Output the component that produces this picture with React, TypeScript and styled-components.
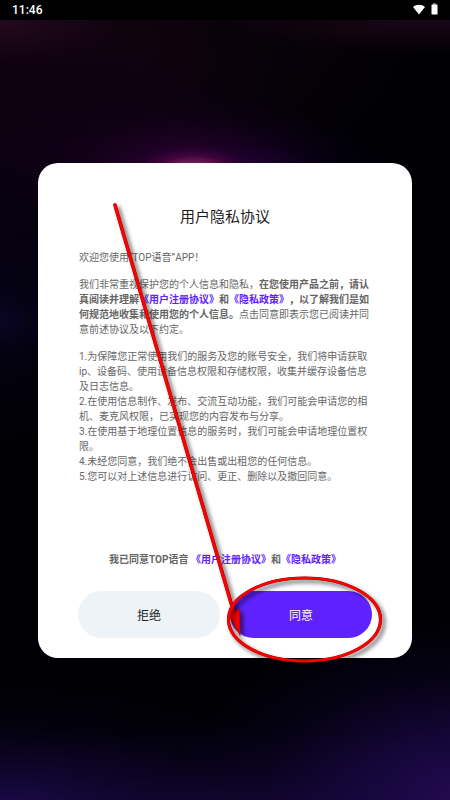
import React from "react";
import styled, { createGlobalStyle } from "styled-components";

const GlobalStyle = createGlobalStyle`
  *, *::before, *::after { box-sizing: border-box; }
  body {
    margin: 0;
    background: #000004;
    font-family: Roboto, "Noto Sans CJK SC", sans-serif;
    text-spacing-trim: space-all;
  }
`;

const Screen = styled.div`
  display: flex;
  flex-direction: column;
  min-height: 100vh;
  overflow: hidden;
`;

const StatusBar = styled.header`
  display: flex;
  align-items: center;
  justify-content: space-between;
  height: 20px;
  padding: 0 12px;
  background: #000;
  color: #fff;
`;

const Clock = styled.time`
  font-size: 12px;
  font-weight: 500;
  line-height: 20px;
`;

const StatusIcons = styled.div`
  display: flex;
  align-items: center;
  gap: 6px;
  height: 18px;
  margin-bottom: 2px;
`;

const Stage = styled.main`
  flex: 1;
  display: flex;
  align-items: center;
  justify-content: center;
  padding: 0 38px;
  background:
    radial-gradient(ellipse 70px 30px at 43% 152px, #cc5a8c 0%, rgba(150, 44, 106, 0.75) 25%, rgba(104, 10, 84, 0.35) 55%, rgba(70, 0, 70, 0.1) 80%, rgba(60, 0, 60, 0) 100%),
    radial-gradient(ellipse 170px 85px at 42% 155px, rgba(74, 0, 80, 0.8) 0%, rgba(50, 0, 62, 0.45) 35%, rgba(28, 0, 40, 0.15) 70%, rgba(20, 0, 30, 0) 100%),
    radial-gradient(ellipse 130px 60px at 59% 155px, rgba(32, 4, 84, 0.5) 0%, rgba(14, 0, 50, 0.2) 50%, rgba(10, 0, 40, 0) 100%),
    radial-gradient(ellipse 60px 40px at 0% 302px, rgba(15, 8, 50, 0.6) 0%, rgba(10, 5, 40, 0.25) 50%, rgba(6, 2, 30, 0) 100%),
    radial-gradient(ellipse 120px 150px at 0% 280px, rgba(8, 3, 28, 0.7) 0%, rgba(4, 1, 16, 0) 100%),
    radial-gradient(ellipse 260px 150px at 14% 130px, rgba(20, 0, 26, 0.6) 0%, rgba(14, 0, 20, 0) 100%),
    radial-gradient(ellipse 120px 50px at 0% 0%, #260a1e 0%, rgba(24, 4, 18, 0) 100%),
    radial-gradient(ellipse 200px 35px at 94% 0%, #1c0618 0%, rgba(14, 2, 12, 0) 100%),
    radial-gradient(ellipse 330px 200px at 22% 0%, #10030e 0%, rgba(8, 0, 8, 0) 100%),
    radial-gradient(ellipse 300px 180px at 104% 100%, #240a52 0%, rgba(27, 8, 72, 0.75) 35%, rgba(14, 4, 46, 0.35) 70%, rgba(6, 1, 20, 0) 100%),
    radial-gradient(ellipse 340px 135px at 0% 102%, #1c0b4e 0%, rgba(18, 6, 52, 0.65) 40%, rgba(8, 2, 28, 0.3) 70%, rgba(4, 1, 14, 0) 100%),
    radial-gradient(ellipse 340px 90px at 50% 102%, #1a0840 0%, rgba(14, 4, 40, 0.5) 50%, rgba(4, 1, 14, 0) 100%),
    #000004;
`;

const Dialog = styled.section`
  position: relative;
  display: flex;
  flex-direction: column;
  width: 100%;
  max-width: 420px;
  padding: 43px 40px 20px;
  border-radius: 20px;
  background: #fff;
`;

const Title = styled.h1`
  margin: 0 0 22px;
  color: #1c1c1c;
  font-size: 15px;
  font-weight: 400;
  line-height: 22px;
  text-align: center;
`;

const Agreement = styled.div`
  display: flex;
  flex-direction: column;
  gap: 12px;
  padding: 0 1px;
  color: #666;
  font-size: 10px;
  line-height: 15px;
`;

const Paragraph = styled.p`
  margin: 0;
`;

const Strong = styled.strong`
  color: #666;
  font-weight: 700;
`;

const Terms = styled.ol`
  margin: 0;
  padding: 0;
  list-style: none;
`;

const PolicyLink = styled.a`
  color: #5f22ff;
  text-decoration: none;
`;

const Consent = styled.p`
  margin: 68px 0 24px;
  color: #666;
  font-size: 10px;
  font-weight: 700;
  line-height: 15px;
  text-align: center;
`;

const Actions = styled.div`
  display: grid;
  grid-template-columns: 1fr 1fr;
  gap: 10px;
`;

const ActionButton = styled.button<{ $primary?: boolean }>`
  height: 47px;
  padding: 0;
  border: 0;
  border-radius: 24px;
  background: ${(p) => (p.$primary ? "#5f22ff" : "#edf3f6")};
  color: ${(p) => (p.$primary ? "#fff" : "#222")};
  font-family: inherit;
  font-size: 12px;
  cursor: pointer;
`;

const Markup = styled.svg`
  position: absolute;
  inset: 0;
  width: 100%;
  height: 100%;
  overflow: visible;
  pointer-events: none;
`;

const WifiIcon = () => (
  <svg width="12" height="11" viewBox="0 0 12 11" aria-hidden="true">
    <path d="M0 3C3.4-.1 8.600-.1 12 3L6 10.400Z" fill="#fff" />
  </svg>
);

const BatteryIcon = () => (
  <svg width="7" height="12" viewBox="0 0 7 12" aria-hidden="true">
    <path d="M2 0h3v2H2z" fill="#777" />
    <rect x="0.500" y="1.500" width="6" height="10" rx="0.600" fill="#fff" />
  </svg>
);

const ArrowMarkup = () => (
  <Markup viewBox="0 0 374 495" aria-hidden="true">
    <defs>
      <filter id="markShadow" x="-20%" y="-20%" width="150%" height="150%">
        <feDropShadow dx="3" dy="3" stdDeviation="2" floodColor="#000" floodOpacity="0.6" />
      </filter>
    </defs>
    <g filter="url(#markShadow)" fill="none" strokeLinecap="round">
      <path d="M77 42L196 450" stroke="#8d1010" strokeWidth="3.600" />
      <path d="M77 42L196 450" stroke="#fe0000" strokeWidth="2.900" />
      <path
        d="M202 472.500L190 450.500L196 448.500L201.500 446Z"
        fill="#fe0000"
        stroke="#8d1010"
        strokeWidth="0.500"
      />
    </g>
    <g filter="url(#markShadow)" fill="none">
      <ellipse cx="266.500" cy="456.500" rx="76" ry="41.500" stroke="#8d1010" strokeWidth="3.200" />
      <ellipse cx="266.500" cy="456.500" rx="76" ry="41.500" stroke="#fe0000" strokeWidth="2.600" />
    </g>
  </Markup>
);

const terms = [
  "1.为保障您正常使用我们的服务及您的账号安全，我们将申请获取ip、设备码、使用设备信息权限和存储权限，收集并缓存设备信息及日志信息。",
  "2.在使用信息制作、发布、交流互动功能，我们可能会申请您的相机、麦克风权限，已实现您的内容发布与分享。",
  "3.在使用基于地理位置信息的服务时，我们可能会申请地理位置权限。",
  "4.未经您同意，我们绝不会出售或出租您的任何信息。",
  "5.您可以对上述信息进行访问、更正、删除以及撤回同意。",
];

export default function App() {
  return (
    <Screen lang="zh-CN">
      <GlobalStyle />
      <StatusBar>
        <Clock>11:46</Clock>
        <StatusIcons>
          <WifiIcon />
          <BatteryIcon />
        </StatusIcons>
      </StatusBar>
      <Stage>
        <Dialog role="dialog" aria-labelledby="dialog-title">
          <Title id="dialog-title">用户隐私协议</Title>
          <Agreement>
            <Paragraph>欢迎您使用“TOP语音”APP！</Paragraph>
            <Paragraph>
              我们非常重视保护您的个人信息和隐私，
              <Strong>
                在您使用产品之前，请认真阅读并理解
                <PolicyLink href="#terms">《用户注册协议》</PolicyLink>和
                <PolicyLink href="#privacy">《隐私政策》</PolicyLink>
                ，以了解我们是如何规范地收集和使用您的个人信息。
              </Strong>
              点击同意即表示您已阅读并同意前述协议及以下约定。
            </Paragraph>
            <Terms>
              {terms.map((term) => (
                <li key={term}>{term}</li>
              ))}
            </Terms>
          </Agreement>
          <Consent>
            我已同意TOP语音 <PolicyLink href="#terms">《用户注册协议》</PolicyLink>和
            <PolicyLink href="#privacy">《隐私政策》</PolicyLink>
          </Consent>
          <Actions>
            <ActionButton type="button">拒绝</ActionButton>
            <ActionButton type="button" $primary>
              同意
            </ActionButton>
          </Actions>
          <ArrowMarkup />
        </Dialog>
      </Stage>
    </Screen>
  );
}
